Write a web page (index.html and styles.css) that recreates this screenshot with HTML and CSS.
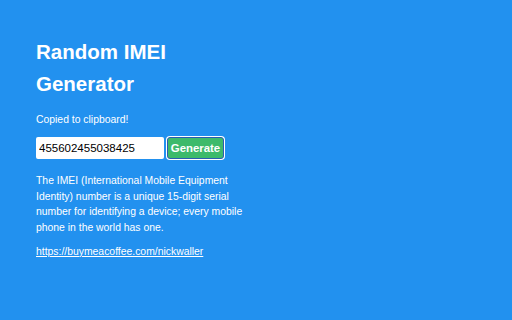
FILE: index.html
```html
<!DOCTYPE html>
<html lang="en">
<head>
<meta charset="utf-8">
<title>Random IMEI Generator</title>
<link rel="stylesheet" href="styles.css">
</head>
<body>
<main class="page">
  <h1 class="title">Random IMEI Generator</h1>
  <div class="status">Copied to clipboard!</div>
  <div class="row">
    <input class="imei" type="text" value="455602455038425">
    <button class="generate" type="button">Generate</button>
  </div>
  <p class="desc">The IMEI (International Mobile Equipment Identity) number is a unique 15-digit serial number for identifying a device; every mobile phone in the world has one.</p>
  <div class="link-line"><a class="link" href="#">https://buymeacoffee.com/nickwaller</a></div>
</main>
</body>
</html>
```

FILE: styles.css
```css
html, body {
  margin: 0;
  padding: 0;
  background: #2291ef;
}
body {
  width: 512px;
  height: 320px;
  overflow: hidden;
  font-family: "Liberation Sans", Arial, Helvetica, sans-serif;
  color: #ffffff;
}
.page {
  padding: 36px 0 0 36px;
}
.title {
  margin: 0;
  width: 180px;
  font-size: 20.5px;
  line-height: 32px;
  font-weight: bold;
}
.status {
  margin-top: 11.6px;
  font-size: 10.4px;
  line-height: 15.5px;
}
.row {
  display: flex;
  gap: 3px;
  margin-top: 10px;
}
.imei {
  box-sizing: border-box;
  width: 128px;
  height: 22px;
  margin: 0;
  border: none;
  border-radius: 2px;
  padding: 0 3px;
  background: #ffffff;
  color: #000000;
  font-family: "Liberation Sans", Arial, Helvetica, sans-serif;
  font-size: 11.5px;
  outline: none;
}
.generate {
  box-sizing: border-box;
  width: 57px;
  height: 22px;
  margin: 0;
  padding: 0;
  border: 1.5px solid #2b5db0;
  border-radius: 3px;
  box-shadow: 0 0 0 1px #ffffff;
  background: #3dba6b;
  color: #ffffff;
  font-family: "Liberation Sans", Arial, Helvetica, sans-serif;
  font-size: 11.4px;
  font-weight: bold;
}
.desc {
  margin: 14.3px 0 0 0;
  width: 220px;
  font-size: 10.4px;
  line-height: 15.4px;
}
.link-line {
  margin-top: 8.5px;
  font-size: 10.4px;
  line-height: 15.5px;
}
.link {
  color: #ffffff;
  text-decoration: underline;
}
```
